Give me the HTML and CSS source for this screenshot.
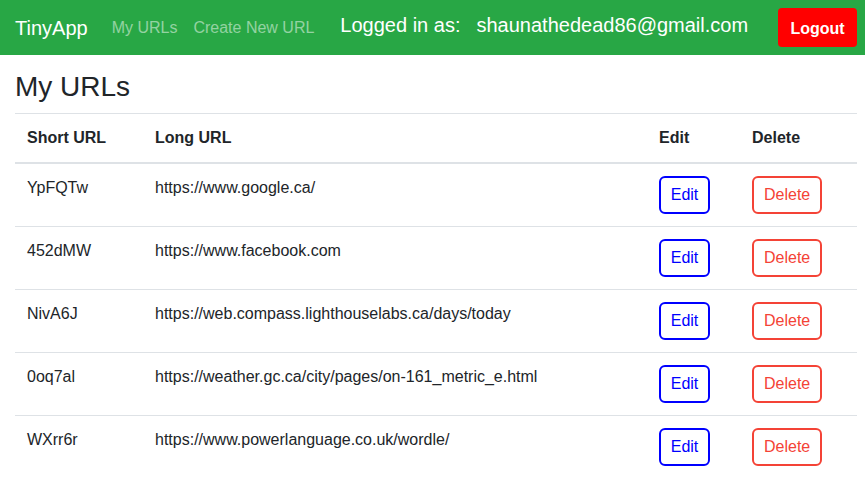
FILE: index.html
```html
<!DOCTYPE html>
<html>
<head>
<meta charset="utf-8">
<link rel="stylesheet" href="styles.css">
</head>
<body>
<nav class="navbar">
  <a class="brand" href="#">TinyApp</a>
  <div class="nav-links">
    <a class="nav-link" href="#">My URLs</a>
    <a class="nav-link" href="#">Create New URL</a>
  </div>
  <div class="user">
    <span class="logged">Logged in as:</span>
    <span class="email">shaunathedead86@gmail.com</span>
  </div>
  <button class="logout">Logout</button>
</nav>
<main class="container">
  <h3 class="title">My URLs</h3>
  <table class="table">
    <thead>
      <tr>
        <th class="c1">Short URL</th>
        <th class="c2">Long URL</th>
        <th class="c3">Edit</th>
        <th class="c4">Delete</th>
      </tr>
    </thead>
    <tbody>
      <tr>
        <td>YpFQTw</td>
        <td>https://www.google.ca/</td>
        <td><button class="btn btn-edit">Edit</button></td>
        <td><button class="btn btn-delete">Delete</button></td>
      </tr>
      <tr>
        <td>452dMW</td>
        <td>https://www.facebook.com</td>
        <td><button class="btn btn-edit">Edit</button></td>
        <td><button class="btn btn-delete">Delete</button></td>
      </tr>
      <tr>
        <td>NivA6J</td>
        <td>https://web.compass.lighthouselabs.ca/days/today</td>
        <td><button class="btn btn-edit">Edit</button></td>
        <td><button class="btn btn-delete">Delete</button></td>
      </tr>
      <tr>
        <td>0oq7al</td>
        <td>https://weather.gc.ca/city/pages/on-161_metric_e.html</td>
        <td><button class="btn btn-edit">Edit</button></td>
        <td><button class="btn btn-delete">Delete</button></td>
      </tr>
      <tr>
        <td>WXrr6r</td>
        <td>https://www.powerlanguage.co.uk/wordle/</td>
        <td><button class="btn btn-edit">Edit</button></td>
        <td><button class="btn btn-delete">Delete</button></td>
      </tr>
    </tbody>
  </table>
</main>
</body>
</html>
```
FILE: styles.css
```css
* { box-sizing: border-box; }
body {
  margin: 0;
  font-family: "Liberation Sans", Arial, sans-serif;
  font-size: 16px;
  line-height: 1.5;
  color: #212529;
  background: #fff;
}
.navbar {
  display: flex;
  align-items: center;
  height: 55px;
  background: #28a745;
  padding: 0 8px 0 15px;
}
.brand {
  color: #fff;
  font-size: 20px;
  text-decoration: none;
  margin-right: 16px;
}
.nav-links { display: flex; }
.nav-link {
  color: rgba(255,255,255,.5);
  text-decoration: none;
  padding: 0 8px;
}
.user {
  display: flex;
  color: #fff;
  font-size: 20px;
  margin-left: 18px;
  margin-top: -5px;
}
.email { margin-left: 16px; }
.logout {
  margin-left: auto;
  background: #ff0000;
  color: #fff;
  font-family: inherit;
  font-weight: bold;
  font-size: 16px;
  border: none;
  border-radius: 4px;
  width: 79px;
  height: 39px;
  padding: 2px 0 0;
  margin-top: 0;
}
.container { padding: 0 8px 0 15px; }
.title {
  font-size: 28px;
  font-weight: 500;
  line-height: 1.2;
  margin: 15px 0 9px;
}
.table {
  width: 100%;
  border-collapse: collapse;
}
.table th, .table td {
  padding: 12px;
  text-align: left;
  vertical-align: top;
  border-top: 1px solid #dee2e6;
}
.table thead th {
  border-bottom: 2px solid #dee2e6;
  font-weight: bold;
}
.c1 { width: 128px; }
.c3 { width: 93px; }
.c4 { width: 117px; }
.btn {
  font-family: inherit;
  font-size: 16px;
  background: #fff;
  border: 2px solid;
  border-radius: 6px;
  height: 38px;
  padding: 0 10px;
  line-height: 1;
}
.btn-edit { color: #0000ff; border-color: #0000ff; width: 51px; padding: 0; }
.btn-delete { color: #f44336; border-color: #f44336; }
```
